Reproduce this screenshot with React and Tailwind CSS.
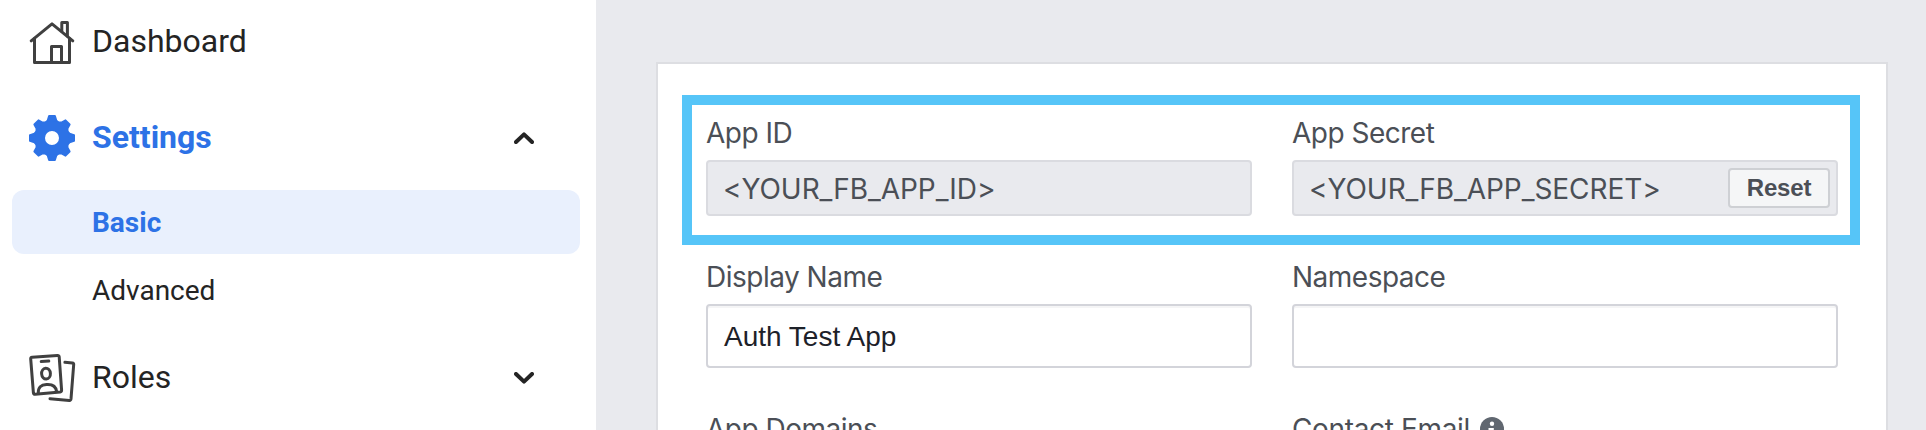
import React from "react";

function HouseIcon() {
  return (
    <svg width="48" height="48" viewBox="28 18 48 48" fill="none" stroke="#404040" strokeWidth="3" strokeLinecap="round" strokeLinejoin="round">
      <path d="M31.2 40.8 L52 23.8 L72.8 40.8" />
      <path d="M34.5 38.5 V62.4 H69.5 V38.5" />
      <path d="M51.5 62 V46.6 H61.5 V62" />
      <path d="M61.8 31 V22.6 H67.4 V36" />
    </svg>
  );
}

const TEETH = [0, 45, 90, 135, 180, 225, 270, 315];

function GearIcon() {
  return (
    <svg width="48" height="48" viewBox="-24 -24 48 48" fill="#2d72e6" stroke="#2d72e6" strokeWidth="2" strokeLinejoin="round">
      {TEETH.map((a) => (
        <path key={a} transform={`rotate(${a})`} d="M-2.9 -22 H2.9 L4.2 -17.6 L8 -14 H-8 L-4.2 -17.6 Z" />
      ))}
      <circle r="12" fill="none" strokeWidth="10" />
    </svg>
  );
}

function RolesIcon() {
  return (
    <svg width="48" height="52" viewBox="28 352 48 52" fill="none" stroke="#404040" strokeWidth="3" strokeLinecap="round" strokeLinejoin="round">
      <path d="M32.2 357.2 L57.4 355.4 Q59 355.3 59.2 356.9 L61.6 390.2 Q61.7 391.7 60.2 391.9 L35.2 394.3 Q33.6 394.4 33.4 392.8 L30.7 358.9 Q30.6 357.4 32.2 357.2 Z" />
      <path d="M41.2 361.6 L48.8 361" />
      <ellipse cx="46" cy="373.6" rx="4.4" ry="5.4" transform="rotate(-4 46 373.6)" />
      <path d="M38.3 393 C38 387.5 41 384.8 46.5 384.5 C52.5 384.1 56 386.5 56.6 391.5" />
      <path d="M64.9 362.3 L72.4 362.9 Q73.8 363 73.7 364.5 L71 398.9 Q70.8 400.5 69.3 400.4 L50 398.7" />
    </svg>
  );
}

function Chevron({ up }) {
  return (
    <svg width="20" height="12" viewBox="0 0 20 12" fill="none" stroke="#242424" strokeWidth="4" strokeLinecap="round" strokeLinejoin="round">
      <path d={up ? "M2 10 L10 2.4 L18 10" : "M2 2 L10 9.6 L18 2"} />
    </svg>
  );
}

function InfoIcon() {
  return (
    <svg width="24" height="24" viewBox="0 0 24 24">
      <circle cx="12" cy="12" r="12" fill="#606770" />
      <circle cx="12" cy="6.8" r="2.2" fill="#fff" />
      <path d="M8.5 11 H13.8 V17 H15.5 V19 H8.5 V17 H10.2 V13 H8.5 Z" fill="#fff" />
    </svg>
  );
}

function NavItem({ icon, children, active, chevron }) {
  return (
    <div className="flex h-12 items-center pl-7">
      <span className="flex w-12 shrink-0 justify-center">{icon}</span>
      <span className={active ? "ml-4 pb-0.5 text-[32px] leading-12 font-bold text-[#2d72e6]" : "ml-4 pb-0.5 text-[32px] leading-12 text-[#242424]"}>
        {children}
      </span>
      {chevron && (
        <span className="mr-[62px] ml-auto">
          <Chevron up={chevron === "up"} />
        </span>
      )}
    </div>
  );
}

function Label({ children }) {
  return <div className="flex h-9 items-center pt-0.5 text-[28px] leading-9 tracking-[-0.5px] whitespace-nowrap text-[#4b4f56]">{children}</div>;
}

function ReadOnlyField({ value, action }) {
  return (
    <div className="mt-2.5 flex h-14 items-center rounded-[4px] border-2 border-[#dadbe0] bg-[#e9eaee] pr-1.5 pl-[15px] text-[28px] text-[#4b4f56]">
      <span className="pt-0.5 tracking-[-0.05px] whitespace-nowrap">{value}</span>
      {action && (
        <button className="ml-auto h-10 w-[102px] rounded-[4px] border-2 border-[#ced0d4] bg-[#f5f6f7] font-['Liberation_Sans',sans-serif] text-[24px] leading-9 font-bold tracking-[-0.2px] text-[#4b4f56]">
          {action}
        </button>
      )}
    </div>
  );
}

function TextField({ value }) {
  return (
    <div className="mt-2.5 flex h-16 items-center rounded-[4px] border-2 border-[#d3d4da] bg-white pt-0.5 pl-4 font-['Liberation_Sans',sans-serif] text-[28px] text-[#1d2129] shadow-[inset_0_2px_0_#f5f5f6]">
      {value}
    </div>
  );
}

export default function App() {
  return (
    <div className="flex h-[430px] w-[1926px] overflow-hidden bg-[#e9eaee]">
      <aside className="w-[596px] shrink-0 bg-white pt-[18px] font-[Roboto,sans-serif]">
        <NavItem icon={<HouseIcon />}>Dashboard</NavItem>
        <div className="mt-12">
          <NavItem icon={<GearIcon />} active chevron="up">Settings</NavItem>
        </div>
        <div className="mt-7 ml-3 h-16 w-[568px] rounded-xl bg-[#e9f0fd] pt-px pl-20 text-[28px] leading-16 font-bold text-[#2d72e6]">Basic</div>
        <div className="mt-[5px] h-16 pl-[92px] text-[28px] leading-16 text-[#242424]">Advanced</div>
        <div className="mt-[31px]">
          <NavItem icon={<RolesIcon />} chevron="down">Roles</NavItem>
        </div>
      </aside>
      <main className="pt-[62px] pl-[60px] font-[Inter,sans-serif]">
        <section className="h-[400px] w-[1232px] border-2 border-[#dddee2] bg-white pt-[31px] pl-6">
          <div className="grid h-[150px] w-[1178px] grid-cols-[546px_546px] gap-x-10 border-[10px] border-[#56c5f8] pt-[9px] pl-3.5">
            <div>
              <Label>App ID</Label>
              <ReadOnlyField value="<YOUR_FB_APP_ID>" />
            </div>
            <div>
              <Label>App Secret</Label>
              <ReadOnlyField value="<YOUR_FB_APP_SECRET>" action="Reset" />
            </div>
          </div>
          <div className="mt-[13px] grid grid-cols-[546px_546px] gap-x-10 gap-y-[42px] pl-6">
            <div>
              <Label>Display Name</Label>
              <TextField value="Auth Test App" />
            </div>
            <div>
              <Label>Namespace</Label>
              <TextField value="" />
            </div>
            <Label>App Domains</Label>
            <Label>
              <span className="tracking-[-0.35px]">Contact Email</span>
              <span className="ml-2.5">
                <InfoIcon />
              </span>
            </Label>
          </div>
        </section>
      </main>
    </div>
  );
}
